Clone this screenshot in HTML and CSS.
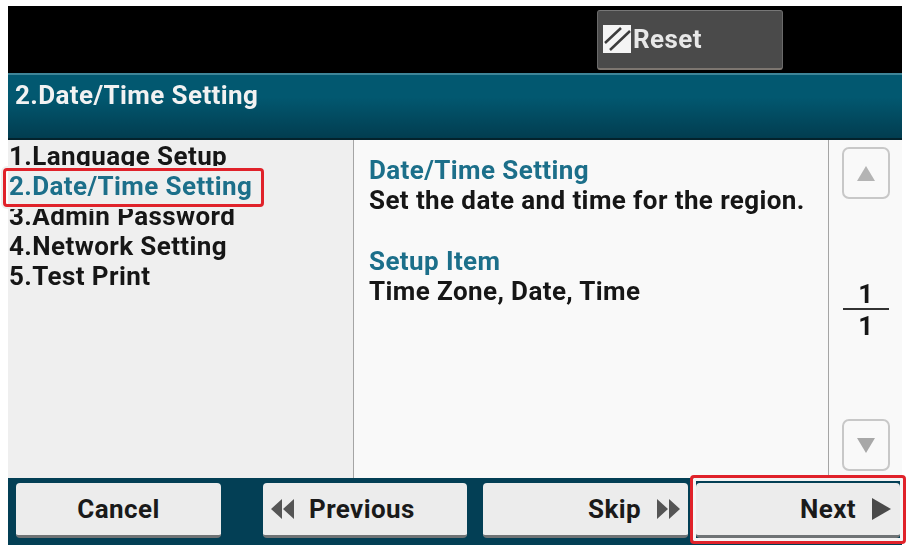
FILE: index.html
```html
<!DOCTYPE html>
<html lang="en">
<head>
  <meta charset="UTF-8">
  <meta name="viewport" content="width=device-width, initial-scale=1.0">
  <title>Date/Time Setting</title>
  <link rel="stylesheet" href="styles.css">
</head>

<body>
  <div class="screen">
    <div class="topbar">
      <button class="reset">
        <svg class="reset-icon" width="28" height="28" viewBox="0 0 28 28">
          <rect width="28" height="28" fill="#f4f4f4"/>
          <path d="M2 18 18 3M7 25 27 6" stroke="#3c3c3c" stroke-width="2.5" fill="none"/>
        </svg>
        Reset
      </button>
    </div>

    <div class="titlebar">2.Date/Time Setting</div>

    <div class="main">
      <ul class="menu">
        <li>1.Language Setup</li>
        <li class="active">2.Date/Time Setting</li>
        <li>3.Admin Password</li>
        <li>4.Network Setting</li>
        <li>5.Test Print</li>
      </ul>

      <div class="detail">
        <h2>Date/Time Setting</h2>
        <p>Set the date and time for the region.</p>
        <h2>Setup Item</h2>
        <p>Time Zone, Date, Time</p>
      </div>

      <div class="pager">
        <button class="page-btn">
          <svg width="18" height="15" viewBox="0 0 18 15"><path d="M9 0 18 15H0Z" fill="#b4b4b4"/></svg>
        </button>
        <div class="page-count">
          <span>1</span>
          <span class="page-total">1</span>
        </div>
        <button class="page-btn">
          <svg width="18" height="15" viewBox="0 0 18 15"><path d="M0 0H18L9 15Z" fill="#a8a8a8"/></svg>
        </button>
      </div>
    </div>

    <div class="footer">
      <button class="foot-btn center cancel">Cancel</button>
      <button class="foot-btn prev">
        <svg width="24" height="20" viewBox="0 0 24 20"><path d="M12 0V20L1 10ZM24 0V20L13 10Z" fill="#555"/></svg>
        Previous
      </button>
      <button class="foot-btn right skip">
        Skip
        <svg width="24" height="20" viewBox="0 0 24 20"><path d="M0 0V20L11 10ZM12 0V20L23 10Z" fill="#555"/></svg>
      </button>
      <button class="foot-btn right next">
        Next
        <svg width="19" height="22" viewBox="0 0 19 22"><path d="M0 0V22L19 11Z" fill="#4a4a4a"/></svg>
      </button>
    </div>
  </div>
</body>
</html>
```

FILE: styles.css
```css
*, *::after {
  box-sizing: border-box;
}

body {
  margin: 0;
  padding: 6px 5px 0 8px;
  background-color: #ffffff;
  font-family: Roboto, "Liberation Sans", sans-serif;
  font-size: 26px;
  font-weight: 700;
  letter-spacing: 0.4px;
  overflow: hidden;
}

button {
  font-family: inherit;
  font-size: inherit;
  font-weight: inherit;
  letter-spacing: inherit;
  cursor: pointer;
}

.screen {
  display: flex;
  flex-direction: column;
  height: 539px;
  filter: blur(0.6px);
}

.topbar {
  display: flex;
  justify-content: flex-end;
  align-items: center;
  height: 67px;
  padding-right: 119px;
  background-color: #000000;
}

.reset {
  display: flex;
  align-items: center;
  gap: 2px;
  width: 186px;
  height: 60px;
  padding: 0 0 0 5px;
  border: 1px solid #6a6a6a;
  border-top-color: #777777;
  border-bottom: 2px solid #7d7670;
  border-radius: 3px;
  background-color: #4a4a4a;
  color: #e8e8e8;
}

.titlebar {
  height: 67px;
  padding: 2px 0 0 7px;
  border-top: 2px solid #3f8598;
  border-bottom: 2px solid #03222c;
  background: linear-gradient(#025870, #025870 35%, #023d50);
  color: #f2f2f2;
  line-height: 36px;
}

.main {
  display: flex;
  flex: 1;
  min-height: 0;
}

.menu {
  width: 346px;
  margin: 0;
  padding: 1px 0 0 1px;
  border-right: 1px solid #a5a5a5;
  background-color: #efefef;
  color: #161616;
  list-style: none;
}

.menu li {
  position: relative;
  height: 30px;
  line-height: 30px;
}

.menu li.active {
  z-index: 1;
  color: #1c6f8a;
}

/* red marker round the current step, its pale edge hides the rows next to it */
.menu li.active::after {
  content: "";
  position: absolute;
  left: -6px;
  top: -3px;
  width: 261px;
  height: 39px;
  border: 3px solid #e0222a;
  border-radius: 4px;
  box-shadow: 0 0 0 2px #efefef;
}

.detail {
  flex: 1;
  padding: 15px 0 0 15px;
  background-color: #f9f9f9;
  line-height: 30px;
  color: #161616;
}

.detail h2 {
  margin: 0;
  color: #1c6f8a;
  font-size: inherit;
}

.detail p {
  margin: 0 0 31px;
}

.pager {
  display: flex;
  flex-direction: column;
  justify-content: space-between;
  align-items: center;
  width: 74px;
  padding: 7px 0 7px 1px;
  border-left: 1px solid #a5a5a5;
  background-color: #f9f9f9;
}

.page-btn {
  display: flex;
  justify-content: center;
  align-items: center;
  width: 48px;
  height: 52px;
  padding: 0;
  border: 2px solid #c8c8c8;
  border-radius: 7px;
  background-color: #f9f9f9;
}

.page-count {
  display: flex;
  flex-direction: column;
  align-items: center;
  margin-top: 1px;
  line-height: 26px;
  color: #161616;
}

.page-count span {
  width: 46px;
  text-align: center;
}

.page-total {
  margin-top: 1px;
  border-top: 2px solid #333333;
  padding-top: 3px;
}

.footer {
  display: flex;
  align-items: flex-start;
  height: 67px;
  padding: 5px 0 0 8px;
  background-color: #033f55;
}

.foot-btn {
  display: flex;
  align-items: center;
  gap: 15px;
  width: 205px;
  height: 55px;
  padding: 0 7px;
  border: none;
  border-bottom: 3px solid #6f7375;
  border-radius: 4px;
  background-color: #ececec;
  color: #1a1a1a;
}

.center {
  justify-content: center;
}

.right {
  justify-content: flex-end;
}

.cancel {
  margin-right: 42px;
}

.prev {
  width: 204px;
  margin-right: 16px;
}

.skip {
  gap: 16px;
}

.next {
  position: relative;
  width: 204px;
  margin-left: 8px;
  padding-right: 9px;
  gap: 16px;
}

/* red marker round the next button */
.next::after {
  content: "";
  position: absolute;
  left: -6px;
  top: -8px;
  width: 216px;
  height: 69px;
  border: 3px solid #e0222a;
  border-radius: 4px;
  box-shadow: inset 0 0 0 3px #f4f4f4;
}
```
